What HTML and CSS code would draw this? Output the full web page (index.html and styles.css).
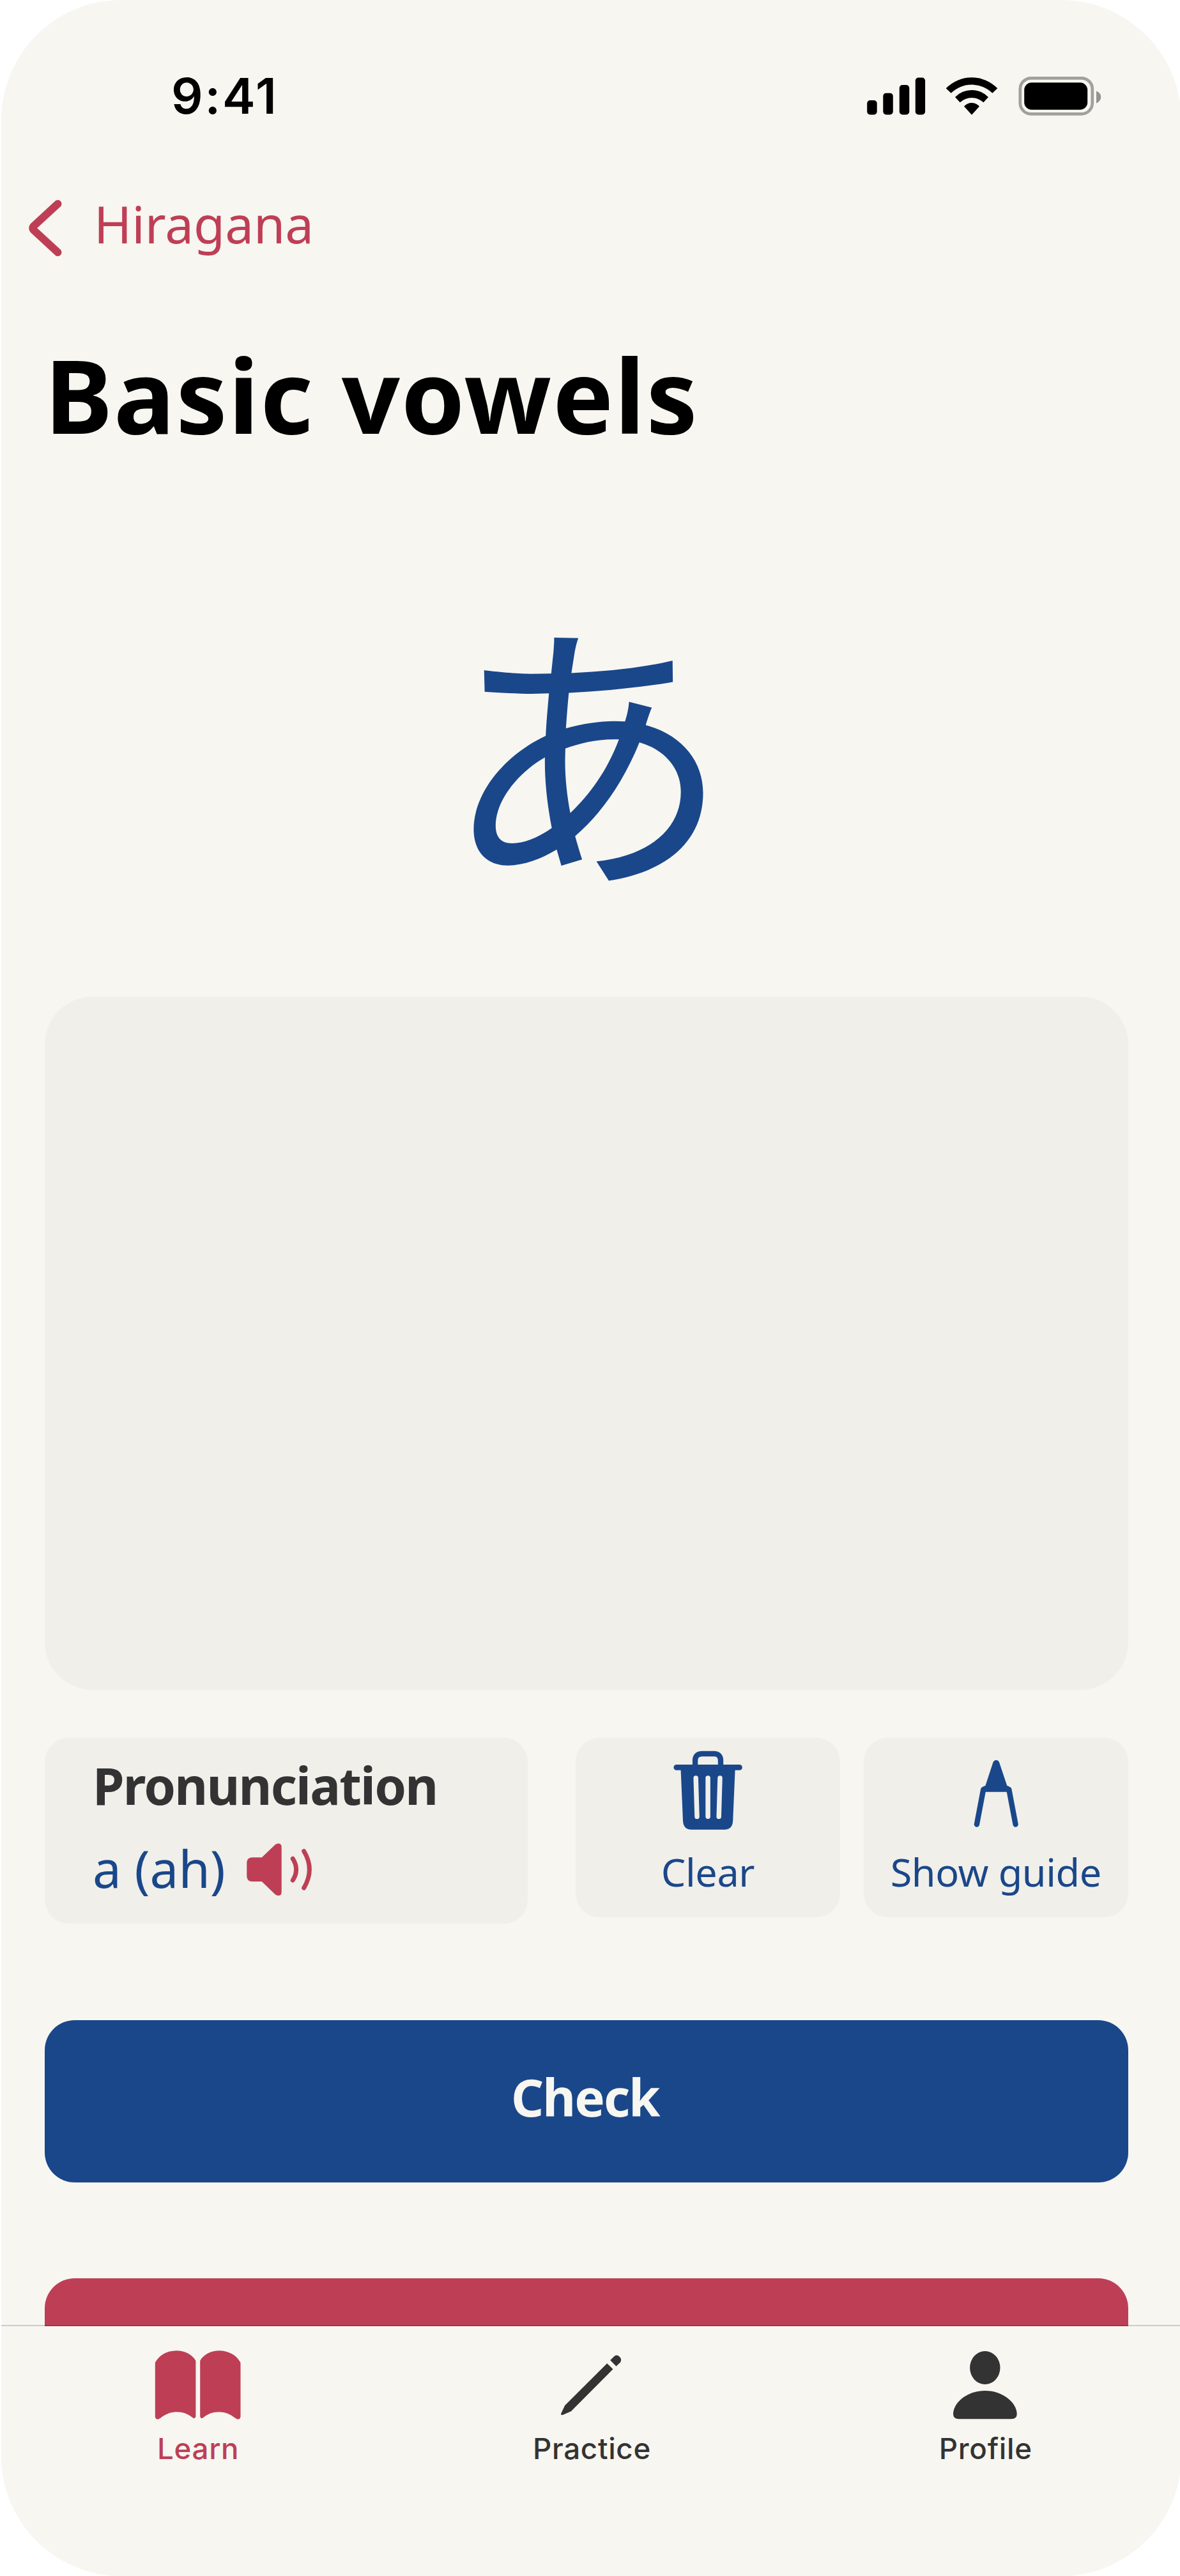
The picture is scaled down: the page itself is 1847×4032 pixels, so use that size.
FILE: index.html
```html
<!DOCTYPE html>
<html lang="en">
<head>
  <meta charset="UTF-8" />
  <meta name="viewport" content="width=device-width, initial-scale=1.0"/>
  <title>Basic vowels</title>
  <link rel="stylesheet" href="styles.css">
</head>
<body>
  <div class="phone">

    <!-- Status bar -->
    <div class="status-bar">
      <span class="time">9:41</span>
      <svg class="status-icons" viewBox="1357 110 368 80">
        <rect x="1357.2" y="157" width="15.5" height="22.5" rx="4.7"/>
        <rect x="1382.3" y="145.7" width="15.5" height="33.8" rx="4.7"/>
        <rect x="1407.8" y="133" width="15.5" height="46.5" rx="4.7"/>
        <rect x="1432.8" y="121.6" width="15.3" height="57.9" rx="4.7"/>
        <path d="M1480.7 138.3A56 56 0 0 1 1561.3 138.3L1553.3 145.8A46 46 0 0 0 1488.7 145.8Z"/>
        <path d="M1495 152A36 36 0 0 1 1547 152L1539.4 160.3A27 27 0 0 0 1502.6 160.3Z"/>
        <path d="M1509 166.4A16 16 0 0 1 1533 166.4L1521 179.8Z"/>
        <rect class="battery-shell" x="1596.8" y="122.3" width="113" height="56" rx="17"/>
        <path class="battery-nub" d="M1716 142.3Q1723.3 146 1723.3 152Q1723.3 158 1716 161.7Z"/>
        <rect x="1603.2" y="129.3" width="99" height="42.4" rx="11.5"/>
      </svg>
    </div>

    <!-- Back link -->
    <a class="back" href="#">
      <svg class="back-icon" viewBox="0 0 52 88">
        <path d="M45.5 6L8 40.5Q4.5 44 8 47.5L45.5 82"/>
      </svg>
      <span>Hiragana</span>
    </a>

    <h1>Basic vowels</h1>

    <div class="character" lang="ja">あ</div>

    <div class="drawing-area"></div>

    <div class="tools">
      <div class="pronunciation">
        <div class="label">Pronunciation</div>
        <div class="sound">
          <span>a (ah)</span>
          <svg class="speaker" viewBox="387 2885 104 83">
            <path d="M396 2907.3H410.8L431.5 2887.5Q434 2885.500 436.5 2885.5Q441.7 2885.5 441.7 2891V2961.5Q441.7 2967 436.5 2967Q434 2967 431.5 2965L410.8 2945H396Q387.3 2945 387.3 2936.500V2915.800Q387.3 2907.3 396 2907.3Z"/>
            <path class="wave" d="M459.3 2909.300Q470 2926 459.3 2943"/>
            <path class="wave" d="M476.7 2897.5Q494 2926 476.7 2955"/>
          </svg>
        </div>
      </div>

      <button class="tool">
        <svg class="tool-icon" viewBox="1038 2737 140 130">
          <path class="line" d="M1088.1 2764V2756Q1088.1 2745 1099 2745H1117.3Q1128 2745 1128 2756V2764"/>
          <rect x="1054.5" y="2762" width="107.3" height="8.7" rx="4.3"/>
          <path d="M1065.5 2768H1150.7L1147.2 2850Q1146.5 2863.7 1134 2863.7H1082Q1069.7 2863.7 1069 2850Z"/>
          <path class="slot" d="M1089.2 2783L1091 2843.3M1108.1 2783V2843.3M1127 2783L1125.2 2843.3"/>
        </svg>
        <span>Clear</span>
      </button>

      <button class="tool">
        <svg class="tool-icon" viewBox="1488.5 2737 140 130">
          <path d="M1553.9 2758.5Q1555.3 2755 1558.8 2755Q1562.3 2755 1563.6 2758.5L1575.8 2795Q1582 2796 1583 2804.7H1534.3Q1535.5 2796 1541.9 2795Z"/>
          <path class="line" d="M1538.7 2801L1528.4 2855.5M1578.8 2801L1589.1 2855.5"/>
        </svg>
        <span>Show guide</span>
      </button>
    </div>

    <button class="check">Check</button>
    <div class="next"></div>

    <!-- Tab bar -->
    <nav class="tab-bar">
      <a class="tab active" href="#">
        <svg viewBox="240 3676 140 114">
          <path d="M242.8 3698C255 3674 294 3673 306.4 3695V3782.5Q305 3786.5 302 3784.5C288 3772 266 3772 251.5 3784.5Q244.5 3789.5 242.8 3783Z"/>
          <path d="M376.5 3698C364.3 3674 325.3 3673 313.2 3695V3782.5Q314.5 3786.5 317.5 3784.5C331.5 3772 353.3 3772 367.8 3784.5Q374.8 3789.5 376.5 3783Z"/>
        </svg>
        <span>Learn</span>
      </a>
      <a class="tab" href="#">
        <svg viewBox="856.5 3676 140 114">
          <path d="M955.7 3694.3L961 3689Q965.500 3684.500 970 3688.500Q974.500 3693 971.500 3697.500L965 3703.7Z"/>
          <path d="M950.7 3699.3L960 3708.3L894.3 3774.3L881 3780Q878 3780.5 878.8 3777.5L884.7 3765Z"/>
        </svg>
        <span>Practice</span>
      </a>
      <a class="tab" href="#">
        <svg viewBox="1473 3676 140 114">
          <ellipse cx="1541.8" cy="3706" rx="23.7" ry="26"/>
          <path d="M1541.8 3742C1570 3742 1591.7 3761 1591.7 3778.5Q1591.7 3786.3 1583 3786.3H1500.7Q1492 3786.3 1492 3778.5C1492 3761 1513.7 3742 1541.8 3742Z"/>
        </svg>
        <span>Profile</span>
      </a>
    </nav>
  </div>
</body>
</html>
```
FILE: styles.css
```css
:root {
  --bg: #f7f6f1;
  --panel: #f0efea;
  --blue: #1a478a;
  --red: #be3f55;
  --dark: #333333;
}

* {
  box-sizing: border-box;
}

body {
  margin: 0;
  background: #ffffff;
  font-family: "Noto Sans", sans-serif;
  overflow: hidden;
}

a {
  text-decoration: none;
}

button {
  border: none;
  padding: 0;
  font-family: inherit;
  cursor: pointer;
}

svg {
  display: block;
  fill: currentColor;
}

.phone {
  position: relative;
  display: flex;
  flex-direction: column;
  width: 1846.7px;
  height: 4032px;
  margin-left: 2px;
  padding: 0 83px 0 68px;
  background: var(--bg);
  border-radius: 188px;
  overflow: hidden;
}

/* Status bar */
.status-bar {
  flex: none;
  display: flex;
  justify-content: space-between;
  align-items: center;
  height: 180px;
  margin-top: 60px;
  padding: 0 41px 0 198px;
}

.time {
  font-family: Inter, sans-serif;
  font-size: 77.6px;
  font-weight: 600;
  letter-spacing: 2.8px;
}

.status-icons {
  width: 368px;
  height: 80px;
}

.battery-shell {
  fill: none;
  stroke: #000;
  stroke-width: 4.7;
  opacity: 0.35;
}

.battery-nub {
  opacity: 0.4;
}

/* Header */
.back {
  flex: none;
  display: flex;
  align-items: center;
  gap: 50px;
  height: 220px;
  margin-left: -25px;
  color: var(--red);
  font-size: 79.9px;
}

.back-icon {
  width: 52px;
  height: 88px;
  margin-top: 14px;
  fill: none;
  stroke: currentColor;
  stroke-width: 12;
  stroke-linecap: round;
}

h1 {
  flex: none;
  margin: 47px 0 0;
  font-size: 159.8px;
  line-height: 220px;
  letter-spacing: 1.8px;
}

.character {
  flex: none;
  height: 833px;
  padding-top: 16px;
  color: var(--blue);
  font-family: "Noto Sans CJK JP", sans-serif;
  font-size: 451px;
  line-height: 834px;
  text-align: center;
}

.drawing-area {
  flex: none;
  height: 1085px;
  background: var(--panel);
  border-radius: 75px;
}

/* Pronunciation and drawing tools */
.tools {
  flex: none;
  display: flex;
  align-items: flex-start;
  gap: 37px;
  margin-top: 75px;
}

.pronunciation {
  width: 756px;
  height: 291px;
  margin-right: 38px;
  padding: 19px 75px;
  background: var(--panel);
  border-radius: 37.6px;
  font-size: 79.9px;
}

.label {
  color: var(--dark);
  font-weight: 700;
  line-height: 110px;
  letter-spacing: -1.8px;
}

.sound {
  display: flex;
  align-items: center;
  gap: 33px;
  margin-top: 20px;
  color: var(--blue);
  line-height: 110px;
}

.speaker {
  width: 104px;
  height: 83px;
  margin-top: 4px;
  color: var(--red);
}

.wave {
  fill: none;
  stroke: currentColor;
  stroke-width: 7;
  stroke-linecap: round;
}

.tool {
  flex: 1;
  display: flex;
  flex-direction: column;
  align-items: center;
  height: 281px;
  padding-top: 17px;
  background: var(--panel);
  border-radius: 37.6px;
  color: var(--blue);
  font-size: 61.1px;
  line-height: 84px;
  letter-spacing: -0.4px;
}

.tool span {
  margin-top: 21px;
}

.tool-icon {
  width: 140px;
  height: 130px;
}

.tool-icon .line {
  fill: none;
  stroke: currentColor;
  stroke-width: 8.4;
  stroke-linecap: round;
}

.tool-icon .slot {
  fill: none;
  stroke: var(--panel);
  stroke-width: 7.5;
  stroke-linecap: round;
}

.check,
.next {
  flex: none;
  height: 254px;
  border-radius: 47px;
}

.check {
  margin-top: 150.5px;
  padding: 0 4px 13px 0;
  background: var(--blue);
  color: var(--bg);
  font-size: 79.9px;
  font-weight: 700;
  line-height: 110px;
  letter-spacing: -2.02px;
}

.next {
  margin-top: 150px;
  background: var(--red);
}

/* Tab bar */
.tab-bar {
  position: absolute;
  left: 0;
  bottom: 0;
  width: 1849px;
  height: 393px;
  display: flex;
  background: var(--bg);
  background-clip: padding-box;
  border-top: 2px solid rgba(0, 0, 0, 0.17);
}

.tab {
  flex: 1;
  display: flex;
  flex-direction: column;
  align-items: center;
  padding-top: 35px;
  color: var(--dark);
  font-family: Inter, sans-serif;
  font-size: 45.7px;
  font-weight: 500;
  line-height: 56px;
  letter-spacing: 0.7px;
}

.tab svg {
  width: 140px;
  height: 114px;
}

.tab span {
  margin-top: 15px;
}

.tab.active {
  color: var(--red);
}
```
